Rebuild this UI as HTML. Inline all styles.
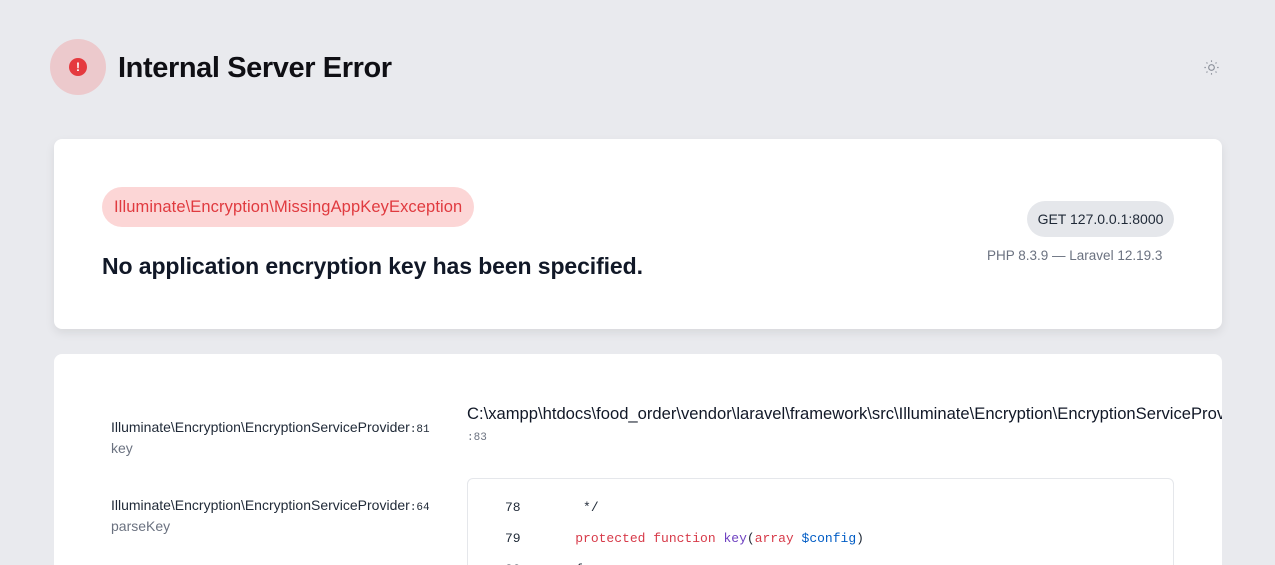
<!DOCTYPE html>
<html><head><style>
html,body{margin:0;width:1275px;height:565px;overflow:hidden}
body{background:#e9eaee;font-family:"Liberation Sans",sans-serif;position:relative}
.a{position:absolute}
.mono{font-family:"Liberation Mono",monospace}
</style></head><body>
<div class="a" style="left:50px;top:39px;width:56px;height:56px;border-radius:50%;background:#ecc9cc"></div>
<div class="a" style="left:69px;top:58px;width:18px;height:18px;border-radius:50%;background:#e5393e;color:#fff;font-size:12px;font-weight:bold;text-align:center;line-height:18px">!</div>
<div class="a" style="left:118px;top:52px;font-size:29px;font-weight:bold;color:#0f0f14;letter-spacing:-0.4px">Internal Server Error</div>
<svg class="a" style="left:1203px;top:59px" width="17" height="17" viewBox="0 0 24 24" fill="none" stroke="#8a8f99" stroke-width="1.6"><circle cx="12" cy="12" r="4"/><path d="M12 2v2M12 20v2M2 12h2M20 12h2M4.9 4.9l1.4 1.4M17.7 17.7l1.4 1.4M4.9 19.1l1.4-1.4M17.7 6.3l1.4-1.4"/></svg>

<div class="a" style="left:54px;top:139px;width:1168px;height:190px;background:#fff;border-radius:8px;box-shadow:0 4px 10px rgba(0,0,0,.08)"></div>
<div class="a" style="left:102px;top:187px;height:40px;padding:0 12px;border-radius:20px;background:#fcd6d6;color:#e03a3f;font-size:16.5px;line-height:40px;letter-spacing:0.1px">Illuminate\Encryption\MissingAppKeyException</div>
<div class="a" style="left:102px;top:253px;font-size:23px;color:#111827;font-weight:bold;letter-spacing:-0.1px">No application encryption key has been specified.</div>
<div class="a" style="left:1027px;top:201px;width:147px;height:36px;border-radius:18px;background:#e5e7eb;color:#1f2937;font-size:14px;line-height:36px;text-align:center">GET 127.0.0.1:8000</div>
<div class="a" style="left:987px;top:248px;font-size:13.5px;color:#6b7280">PHP 8.3.9 — Laravel 12.19.3</div>

<div class="a" style="left:54px;top:354px;width:1168px;height:211px;background:#fff;border-radius:8px 8px 0 0;overflow:hidden">
<div class="a" style="left:57px;top:65px;font-size:14px;color:#1f2937;white-space:nowrap">Illuminate\Encryption\EncryptionServiceProvider<span class="mono" style="font-size:11px">:81</span></div>
<div class="a" style="left:57px;top:86px;font-size:14px;color:#6b7280">key</div>
<div class="a" style="left:57px;top:143px;font-size:14px;color:#1f2937;white-space:nowrap">Illuminate\Encryption\EncryptionServiceProvider<span class="mono" style="font-size:11px">:64</span></div>
<div class="a" style="left:57px;top:164px;font-size:14px;color:#6b7280">parseKey</div>
<div class="a" style="left:413px;top:50px;font-size:16.6px;color:#111827;white-space:nowrap">C:\xampp\htdocs\food_order\vendor\laravel\framework\src\Illuminate\Encryption\EncryptionServiceProvider.php</div>
<div class="a mono" style="left:413px;top:78px;font-size:11px;color:#6b7280">:83</div>
<div class="a" style="left:413px;top:124px;width:705px;height:120px;border:1px solid #e5e7eb;border-radius:6px;background:#fff"></div>
<div class="a mono" style="left:451px;top:138px;font-size:13px;line-height:31px;color:#1f2937;white-space:pre">78        */
79       <span style="color:#d73a49">protected function</span> <span style="color:#6f42c1">key</span>(<span style="color:#d73a49">array</span> <span style="color:#005cc5">$config</span>)
80       {</div>
</div>
</body></html>
